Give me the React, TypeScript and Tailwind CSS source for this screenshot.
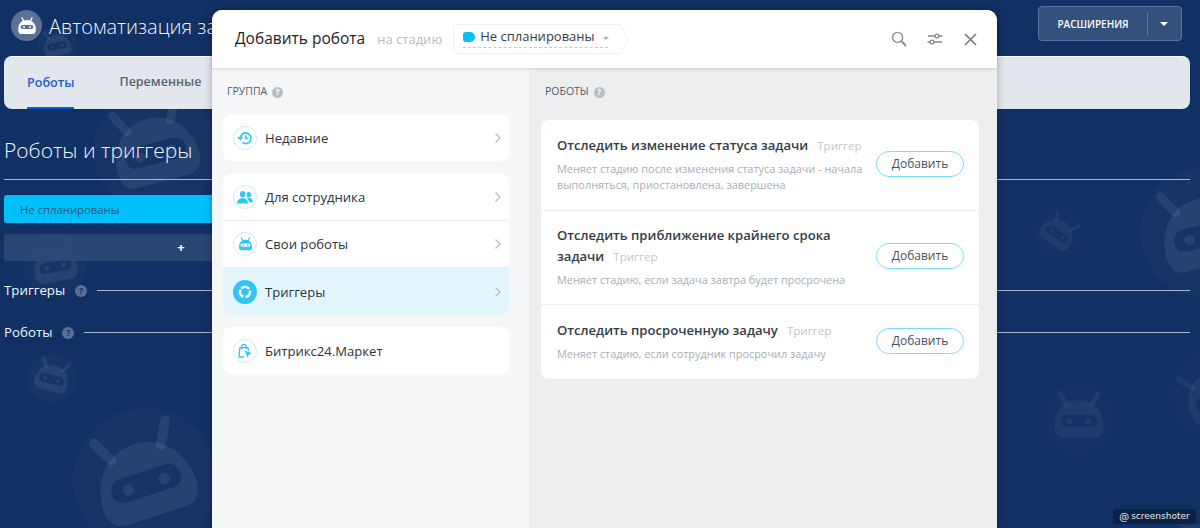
import React from "react";

function Robot({ x, y, r, rot = 0, o = 1 }: { x: number; y: number; r: number; rot?: number; o?: number }) {
  return (
    <svg
      className="absolute"
      style={{ left: x - r, top: y - r, width: r * 2, height: r * 2, transform: `rotate(${rot}deg)`, opacity: o }}
      viewBox="0 0 100 100"
    >
      <circle cx="50" cy="50" r="50" fill="#ffffff" fillOpacity="0.025" />
      <g fill="#ffffff" fillOpacity="0.07">
        <path d="M32 30 L24 15" stroke="#fff" strokeOpacity="0.07" strokeWidth="7" strokeLinecap="round" fill="none" />
        <path d="M68 30 L76 15" stroke="#fff" strokeOpacity="0.07" strokeWidth="7" strokeLinecap="round" fill="none" />
        <path
          fillRule="evenodd"
          d="M50 24 C70 24 83 40 84 60 C84 70 80 76 72 76 L28 76 C20 76 16 70 16 60 C17 40 30 24 50 24 Z M34 44 C27 44 25 49 25 53 C25 58 28 61 34 61 L66 61 C72 61 75 58 75 53 C75 49 73 44 66 44 Z"
        />
        <circle cx="37" cy="53" r="4" />
        <circle cx="63" cy="53" r="4" />
      </g>
    </svg>
  );
}

function Help({ className }: { className: string }) {
  return (
    <span className={`inline-flex items-center justify-center rounded-full font-bold leading-none ${className}`}>?</span>
  );
}

function RoundIcon({ children, active }: { children: React.ReactNode; active?: boolean }) {
  return (
    <span
      className={`flex h-6 w-6 shrink-0 items-center justify-center rounded-full ${
        active ? "bg-[#2fc6f6]" : "border border-[#c5eefc] bg-white"
      }`}
    >
      {children}
    </span>
  );
}

function Chevron() {
  return (
    <svg width="8" height="12" viewBox="0 0 8 12" className="ml-auto shrink-0" fill="none" stroke="#b9bec4" strokeWidth="1.4">
      <path d="M1.5 1.5 L6 6 L1.5 10.5" />
    </svg>
  );
}

const HistoryIcon = (
  <svg width="16" height="16" viewBox="0 0 16 16" fill="none" stroke="#2fc6f6" strokeWidth="1.7">
    <path d="M3.4 8 A5.3 5.3 0 1 1 5.4 12.4" />
    <path d="M0 6.8 H6.6 L3.3 10.4 Z" fill="#2fc6f6" stroke="none" />
    <path d="M8.7 5 V8.6 H11.3" strokeWidth="1.5" />
  </svg>
);

const UsersIcon = (
  <svg width="16" height="13" viewBox="0 0 16 13" fill="#2fc6f6">
    <ellipse cx="5.6" cy="3.2" rx="2.7" ry="3.1" />
    <ellipse cx="11.8" cy="3.6" rx="2.3" ry="2.7" />
    <path d="M0 12.6 C0 8.8 2.4 7.2 5.6 7.2 C8.8 7.2 11 8.8 11 12.6 Z" />
    <path d="M10 6.9 C13 6.2 16 7.6 16 11.2 L12 11.2 C11.8 9.4 11.1 8 10 6.9 Z" />
  </svg>
);

const BotIcon = (
  <svg width="15" height="15" viewBox="0 0 15 15" fill="#2fc6f6">
    <path d="M3.4 .8 L4.6 3.4 M11.6 .8 L10.4 3.4" stroke="#2fc6f6" strokeWidth="1.2" strokeLinecap="round" />
    <path
      fillRule="evenodd"
      d="M7.5 2.8 C11 2.8 13.8 5.4 14 9.4 C14.1 12 13.4 13.2 12 13.2 H3 C1.6 13.2 .9 12 1 9.4 C1.2 5.4 4 2.8 7.5 2.8 Z M4.4 6.6 C3 6.6 2.6 7.4 2.6 8.2 C2.6 9 3.2 9.8 4.4 9.8 H10.6 C11.8 9.8 12.4 9 12.4 8.2 C12.4 7.4 12 6.6 10.6 6.6 Z"
    />
    <circle cx="5.2" cy="8.2" r="0.8" />
    <circle cx="9.8" cy="8.2" r="0.8" />
  </svg>
);

const TriggerIcon = (
  <svg width="16" height="16" viewBox="0 0 16 16" fill="none" stroke="#fff" strokeWidth="2.6">
    <circle cx="8" cy="8" r="5" strokeDasharray="8.47 2" transform="rotate(-138.6 8 8)" />
  </svg>
);

const MarketIcon = (
  <svg width="16" height="16" viewBox="0 0 16 16" fill="none" stroke="#2fc6f6" strokeWidth="1.3">
    <path d="M2.8 4.6 H11 L11.4 8 M7 14 H2 L2.8 4.6" />
    <path d="M4.8 6.2 V3.4 A2.1 2.1 0 0 1 9 3.4 V6.2" />
    <path d="M7.6 7.4 L14.8 10.2 L12 11.4 L10.6 14.6 Z" fill="#2fc6f6" stroke="none" />
  </svg>
);

function GroupRow({
  icon,
  label,
  active,
  chevron = true,
  h,
}: {
  icon: React.ReactNode;
  label: string;
  active?: boolean;
  chevron?: boolean;
  h: string;
}) {
  return (
    <div className={`flex items-center gap-[8px] pl-[10px] pr-[7px] ${h} ${active ? "bg-[#e3f6fd]" : ""}`}>
      <RoundIcon active={active}>{icon}</RoundIcon>
      <span className="pt-[2px] text-[13.1px] font-medium text-[#2b333d]">{label}</span>
      {chevron && <Chevron />}
    </div>
  );
}

function AddButton() {
  return (
    <button className="h-[26px] w-[88px] shrink-0 rounded-full border border-[#7bdcfb] bg-white text-[12px] font-medium leading-none text-[#48515d]">
      Добавить
    </button>
  );
}

function RobotRow({
  title,
  desc,
  h,
  border,
}: {
  title: string;
  desc: React.ReactNode;
  h: string;
  border?: boolean;
}) {
  return (
    <div className={`flex items-center pb-[3px] pl-4 pr-[15px] ${h} ${border ? "border-b border-[#edeef0]" : ""}`}>
      <div className="min-w-0 flex-1 pr-[8px]">
        <div className="text-[13.1px] font-semibold leading-[21px] text-[#333c47]">
          {title}
          <span className="ml-[9px] text-[11.6px] font-normal text-[#c4c7cb]">Триггер</span>
        </div>
        <div className="mt-[5px] text-[10.9px] leading-[16px] text-[#a8adb4]">{desc}</div>
      </div>
      <AddButton />
    </div>
  );
}

function Line({ label, offset }: { label: string; offset: string }) {
  return (
    <div className={`flex items-center ${offset}`}>
      <span className="text-[13.3px] font-medium text-[#f2f5f9]">{label}</span>
      <Help className="ml-[10px] h-[12px] w-[12px] bg-[#5c7096] text-[9px] text-[#153263]" />
      <div className="ml-[10px] h-px flex-1 bg-[#a8b5ca]" />
    </div>
  );
}

export default function App() {
  return (
    <div className="relative h-[528px] w-[1200px] overflow-hidden bg-[#113063] font-['Open_Sans',sans-serif]">
      <Robot x={57} y={45} r={20} rot={-10} />
      <Robot x={155} y={150} r={62} rot={-15} />
      <Robot x={55} y={265} r={32} rot={-12} />
      <Robot x={52} y={378} r={25} rot={15} />
      <Robot x={145} y={480} r={72} rot={-18} />
      <Robot x={1058} y={233} r={25} rot={35} o={0.7} />
      <Robot x={1079} y={419} r={36} o={0.7} />
      <Robot x={1205} y={232} r={65} rot={-15} />
      <Robot x={1215} y={395} r={45} rot={-30} o={0.7} />
      <Robot x={1195} y={540} r={30} o={0.7} />

      <div className="relative flex h-[528px] flex-col pl-1 pr-[10px]">
        <header className="flex h-[56px] items-start">
          <div className="ml-[7px] mt-[10px] flex h-[31px] w-[31px] items-center justify-center rounded-full bg-[#5b7194]">
            <svg width="20" height="18" viewBox="0 0 20 18" fill="#fff">
              <path d="M5 0.8 L6.6 4 M15 0.8 L13.4 4" stroke="#fff" strokeWidth="1.4" strokeLinecap="round" />
              <path
                fillRule="evenodd"
                d="M10 3 C15 3 18.4 6.4 18.8 11 C19 15 18 17 16 17 H4 C2 17 1 15 1.2 11 C1.6 6.4 5 3 10 3 Z M6 8 C4.3 8 3.6 9 3.6 10 C3.6 11 4.3 12 6 12 H14 C15.7 12 16.4 11 16.4 10 C16.4 9 15.7 8 14 8 Z"
              />
              <circle cx="7" cy="10" r="1" />
              <circle cx="13" cy="10" r="1" />
            </svg>
          </div>
          <div className="ml-[7px] mt-[12px] whitespace-nowrap text-[20px] font-light leading-[30px] text-[#f2f5f9]">
            Автоматизация задач
          </div>
          <div className="ml-auto mr-[8px] mt-[6px] flex h-[35px] w-[144px] items-center rounded-[4px] border border-[#5a7297] bg-[#34507c]">
            <span className="w-[108px] pt-px text-center text-[10px] font-semibold text-white">РАСШИРЕНИЯ</span>
            <span className="h-[24px] w-px bg-[#5f7699]" />
            <svg width="8" height="4" viewBox="0 0 8 4" className="ml-[12px]" fill="#fff">
              <path d="M0 0 H8 L4 4 Z" />
            </svg>
          </div>
        </header>

        <nav className="flex h-[53px] items-stretch gap-[45px] rounded-lg border-t border-white bg-[#eef0f4]/95 pl-[23px]">
          <span className="flex items-center border-b-2 border-[#1058d0] pt-[2px] text-[12.6px] font-semibold text-[#1f5fc8]">
            Роботы
          </span>
          <span className="flex items-center pb-px text-[12.5px] font-semibold text-[#5b6571]">Переменные</span>
        </nav>

        <h1 className="mt-[24px] text-[21px] font-light leading-[34px] text-[#f2f5f9]">Роботы и триггеры</h1>
        <div className="mt-[12px] h-px bg-[#a8b5ca]" />

        <div className="mt-[15px] flex h-[28px] w-[400px] items-center rounded-[3px] bg-[#00c0fb] pl-4 pt-[2px] text-[11.3px] font-medium text-[#30587c]">
          Не спланированы
        </div>
        <div className="mt-[11px] flex h-[27px] w-[354px] items-center justify-center rounded-[3px] bg-[#2c4873]/90 text-[13px] font-bold leading-none text-white">
          +
        </div>
        <Line label="Триггеры" offset="mt-[20px]" />
        <Line label="Роботы" offset="mt-[22px]" />
      </div>

      {/* modal */}
      <div className="absolute bottom-0 left-[212px] top-[10px] flex w-[785px] flex-col rounded-t-[10px] bg-[#f5f7f8] shadow-[0_0_8px_rgba(0,0,0,0.25)]">
        <div className="relative z-10 flex h-[58px] shrink-0 items-center rounded-t-[10px] bg-white pl-[23px] pr-[20px] shadow-[0_1px_3px_rgba(0,0,0,0.15)]">
          <span className="text-[15.5px] font-medium text-[#1f2329]">Добавить робота</span>
          <span className="ml-[12px] mt-[2px] text-[13px] text-[#b9bdc3]">на стадию</span>
          <div className="relative ml-[11px] h-[30px] w-[176px] shrink-0">
            <svg className="absolute inset-0" width="176" height="30" viewBox="0 0 176 30" fill="#fff" stroke="#eef0f2">
              <path d="M5 .5 H168 L175 15 L168 29.5 H5 A4.5 4.5 0 0 1 .5 25 V5 A4.5 4.5 0 0 1 5 .5 Z" />
            </svg>
            <div className="relative ml-[10px] flex h-[24px] w-[145px] items-center border-b border-dashed border-[#c6cacf] pt-[3px]">
              <span className="mr-[5px] h-[10px] w-[12px] shrink-0 rounded-l-[3px] rounded-r-[5px] bg-[#00c0fb]" />
              <span className="whitespace-nowrap text-[13px] font-medium text-[#333c47]">Не спланированы</span>
              <svg width="6" height="3" viewBox="0 0 6 3" className="ml-[8px] mt-[3px] shrink-0" fill="#a8adb4">
                <path d="M0 0 H6 L3 3 Z" />
              </svg>
            </div>
          </div>
          <div className="ml-auto flex items-center gap-[20px]">
            <svg width="16" height="16" viewBox="0 0 16 16" fill="none" stroke="#868d95" strokeWidth="1.4">
              <circle cx="6.6" cy="6.4" r="5" />
              <path d="M10.4 10.2 L15 15" strokeWidth="1.9" />
            </svg>
            <svg width="16" height="14" viewBox="0 0 16 14" fill="none" stroke="#868d95" strokeWidth="1.4">
              <path d="M1 4 H8 M12 4 H15.5 M.5 10 H3 M7 10 H15" />
              <circle cx="10" cy="4" r="1.9" />
              <circle cx="5" cy="10" r="1.9" />
            </svg>
            <svg width="13" height="13" viewBox="0 0 13 13" stroke="#757c85" strokeWidth="1.7" className="ml-[1px]">
              <path d="M1 1 L12 12 M12 1 L1 12" />
            </svg>
          </div>
        </div>

        <div className="flex min-h-0 flex-1">
          <div className="w-[317px] shrink-0 bg-[#f5f7f8] pl-[11px] pr-[20px]">
            <div className="ml-[4px] mt-[17px] flex h-[14px] items-center text-[10.5px] font-medium text-[#525c69]">
              ГРУППА
              <Help className="ml-[5px] h-[11px] w-[11px] bg-[#b9bec4] text-[8px] text-white" />
            </div>
            <div className="mt-[16px] overflow-hidden rounded-[8px] bg-white">
              <GroupRow icon={HistoryIcon} label="Недавние" h="h-[46px]" />
            </div>
            <div className="mt-[13px] overflow-hidden rounded-[8px] bg-white">
              <div className="border-b border-[#edeef0]">
                <GroupRow icon={UsersIcon} label="Для сотрудника" h="h-[46px]" />
              </div>
              <div className="border-b border-[#edeef0]">
                <GroupRow icon={BotIcon} label="Свои роботы" h="h-[46px]" />
              </div>
              <GroupRow icon={TriggerIcon} label="Триггеры" active h="h-[47px]" />
            </div>
            <div className="mt-[12px] overflow-hidden rounded-[8px] bg-white">
              <GroupRow icon={MarketIcon} label="Битрикс24.Маркет" chevron={false} h="h-[47px]" />
            </div>
          </div>

          <div className="flex-1 bg-[#edeef0] pl-[12px] pr-[18px]">
            <div className="ml-[4px] mt-[17px] flex h-[14px] items-center text-[10.5px] font-medium text-[#525c69]">
              РОБОТЫ
              <Help className="ml-[5px] h-[11px] w-[11px] bg-[#b9bec4] text-[8px] text-white" />
            </div>
            <div className="mt-[21px] overflow-hidden rounded-[8px] bg-white">
              <RobotRow
                title="Отследить изменение статуса задачи"
                desc={
                  <>
                    Меняет стадию после изменения статуса задачи - начала
                    <br />
                    выполняться, приостановлена, завершена
                  </>
                }
                h="h-[91px]"
                border
              />
              <RobotRow
                title="Отследить приближение крайнего срока задачи"
                desc="Меняет стадию, если задача завтра будет просрочена"
                h="h-[94px]"
                border
              />
              <RobotRow
                title="Отследить просроченную задачу"
                desc="Меняет стадию, если сотрудник просрочил задачу"
                h="h-[74px]"
              />
            </div>
          </div>
        </div>
      </div>

      <div className="absolute bottom-[4px] right-[4px] flex h-[15px] w-[83px] items-center justify-center gap-[2px] rounded-[2px] bg-[#0c2145] text-[10px] leading-none text-[#e6e9ee]">
        <span className="text-[11px]">@</span>
        <span className="font-['DejaVu_Sans',sans-serif] text-[9px]">screenshoter</span>
      </div>
    </div>
  );
}
